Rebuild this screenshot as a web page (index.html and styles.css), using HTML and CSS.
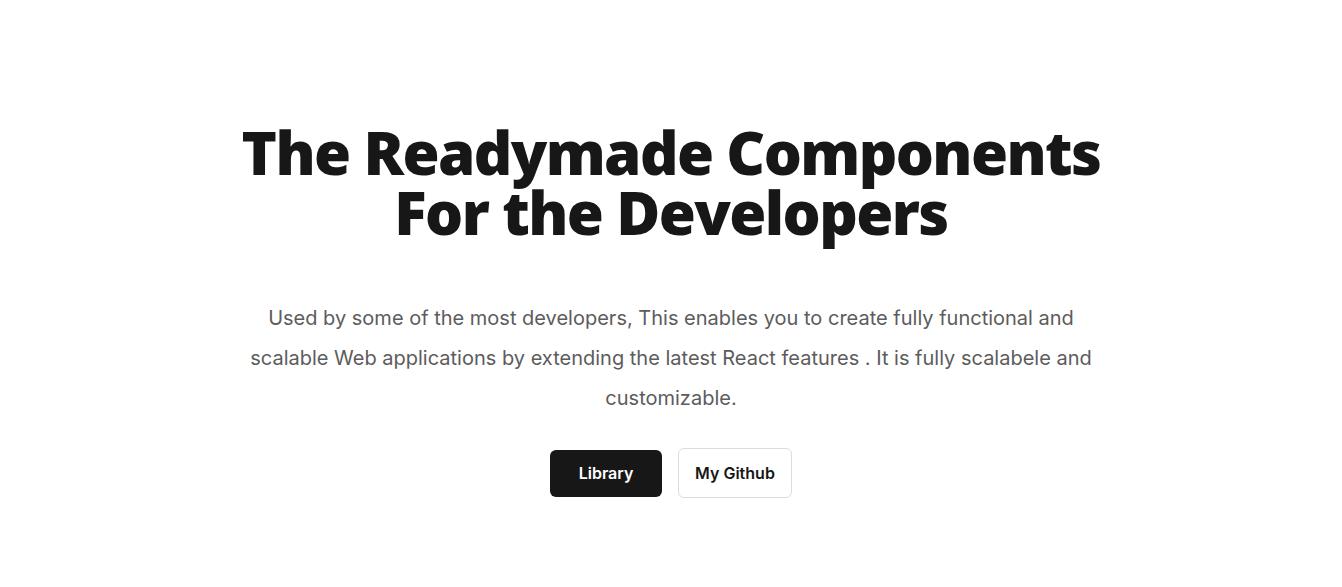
FILE: index.html
```html
<!DOCTYPE html>
<html lang="en">
<head>
<meta charset="utf-8">
<title>Readymade Components</title>
<link rel="stylesheet" href="styles.css">
</head>
<body>
<main class="hero">
  <h1 class="title">The Readymade Components<br>For the Developers</h1>
  <p class="lead">Used by some of the most developers, This enables you to create fully functional and scalable Web applications by extending the latest React features . It is fully scalabele and customizable.</p>
  <div class="actions">
    <a class="btn btn-dark" href="#">Library</a>
    <a class="btn btn-light" href="#">My Github</a>
  </div>
</main>
</body>
</html>
```

FILE: styles.css
```css
* { box-sizing: border-box; }
html, body { margin: 0; padding: 0; background: #fff; }
body { font-family: Inter, "Liberation Sans", sans-serif; }
.hero {
  display: flex;
  flex-direction: column;
  align-items: center;
  padding-top: 122px;
  text-align: center;
}
.title {
  margin: 0;
  font-family: "Open Sans", sans-serif;
  font-weight: 800;
  font-size: 60px;
  line-height: 60px;
  color: #171717;
  letter-spacing: -1.6px;
}
.lead {
  margin: 56px 0 0;
  max-width: 860px;
  font-size: 20px;
  line-height: 40px;
  color: #5c5c5c;
}
.actions {
  display: flex;
  gap: 16px;
  align-items: center;
  margin-top: 30px;
}
.btn {
  display: inline-flex;
  align-items: center;
  justify-content: center;
  border-radius: 6px;
  font-size: 16px;
  font-weight: 600;
  text-decoration: none;
}
.btn-dark {
  width: 112px;
  height: 47px;
  background: #171717;
  color: #fff;
}
.btn-light {
  width: 114px;
  height: 50px;
  background: #fff;
  color: #171717;
  border: 1px solid #dcdcdc;
}
```
